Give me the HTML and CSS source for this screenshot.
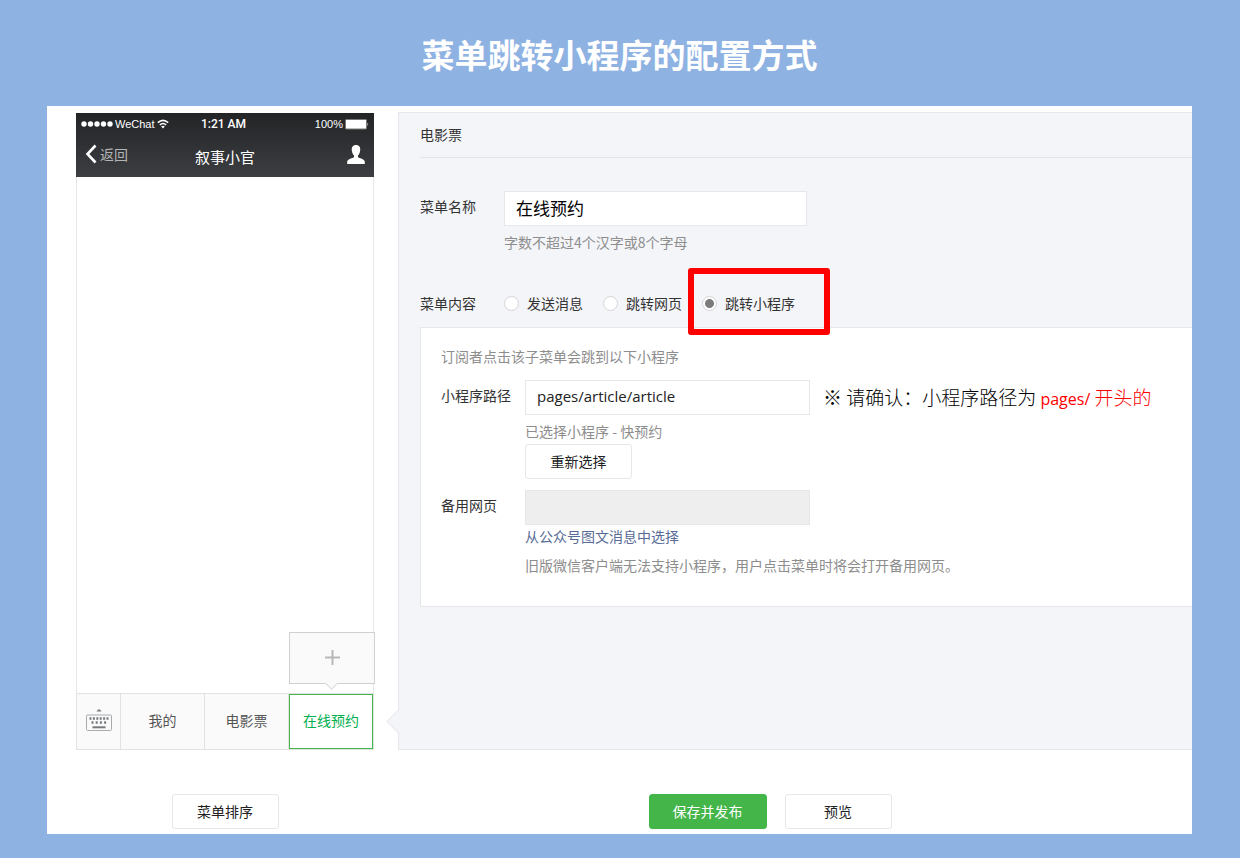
FILE: index.html
```html
<!DOCTYPE html>
<html lang="zh-CN">
<head>
<meta charset="utf-8">
<meta name="viewport" content="width=device-width, initial-scale=1">
<title>菜单跳转小程序的配置方式</title>
<link rel="stylesheet" href="styles.css">
</head>
<body class="page">
<h1 class="page-title">菜单跳转小程序的配置方式</h1>
<main class="board">
  <section class="phone">
    <header class="phone-head">
      <div class="status">
        <span class="carrier">
          <svg width="32" height="8" viewBox="0 0 32 8" fill="#fff" aria-hidden="true"><circle cx="3" cy="4" r="2.7"/><circle cx="9.5" cy="4" r="2.7"/><circle cx="16" cy="4" r="2.7"/><circle cx="22.5" cy="4" r="2.7"/><circle cx="29" cy="4" r="2.7"/></svg>
          WeChat
          <svg width="12" height="10" viewBox="0 0 12 10" fill="none" stroke="#fff" stroke-width="1.6" aria-hidden="true"><path d="M.8 3.6Q6-1 11.2 3.6M2.9 5.9Q6 3.1 9.1 5.9"/><path d="M4.2 7.4Q6 5.9 7.8 7.4L6 9.4Z" fill="#fff" stroke="none"/></svg>
        </span>
        <span class="clock">1:21 AM</span>
        <span class="battery">100%
          <svg width="24" height="11" viewBox="0 0 24 11" aria-hidden="true"><rect x=".5" y=".5" width="21" height="9.5" rx="1" fill="#fff" stroke="#777"/><path d="M22.5 3.5q1.5 1.8 0 3.6z" fill="#fff"/></svg>
        </span>
      </div>
      <div class="navbar">
        <a class="back" href="#"><svg width="12" height="20" viewBox="0 0 12 20" fill="none" stroke="#fff" stroke-width="2.6" aria-hidden="true"><path d="M10.5 1.5 2.5 10l8 8.5"/></svg>返回</a>
        <span class="nav-title">叙事小官</span>
        <svg class="user" width="18" height="19" viewBox="0 0 18 19" fill="#fff" aria-hidden="true"><path d="M9 0c3 0 4.5 2.2 4.2 5.2-.2 2.300-1 4-2.200 5.200v1.800c1 1 6.500 1.600 6.800 4.300V19H.2v-2.500c.3-2.700 5.800-3.300 6.800-4.300v-1.800C5.800 9.200 5 7.500 4.800 5.200 4.500 2.200 6 0 9 0z"/></svg>
      </div>
    </header>
    <div class="phone-body"></div>
    <nav class="menu">
      <button class="menu-key" type="button" aria-label="键盘">
        <svg width="26" height="24" viewBox="0 0 26 24" aria-hidden="true"><path d="M10.500 3.500 12 1.500h2l1.500 2z" fill="#777a7d"/><rect x=".5" y="7" width="25" height="15.500" rx="1" fill="none" stroke="#a9abad"/><path d="M3.500 10.500h19" stroke="#777a7d" stroke-width="2.500" stroke-dasharray="2 1.400"/><path d="M5.500 14.500h15" stroke="#777a7d" stroke-width="2.500" stroke-dasharray="2 2.200"/><path d="M6.500 19.300h13" stroke="#777a7d" stroke-width="2"/></svg>
      </button>
      <button class="menu-item" type="button">我的</button>
      <button class="menu-item" type="button">电影票</button>
      <div class="menu-slot">
        <button class="menu-item menu-item-current" type="button">在线预约</button>
        <button class="submenu-add" type="button" aria-label="添加"><svg width="15" height="15" viewBox="0 0 15 15" stroke="#b8b8b8" stroke-width="2" aria-hidden="true"><path d="M7.500 0v15M0 7.500h15"/></svg></button>
      </div>
    </nav>
  </section>

  <form class="editor" id="menu-form">
    <h2 class="editor-title">电影票</h2>
    <div class="field field-name">
      <label class="label" for="name">菜单名称</label>
      <div class="field-main">
        <input class="input input-name" id="name" type="text" value="在线预约">
        <p class="note">字数不超过4个汉字或8个字母</p>
      </div>
    </div>
    <div class="field field-kind" role="radiogroup" aria-labelledby="kind">
      <span class="label" id="kind">菜单内容</span>
      <div class="options">
        <label class="option"><input class="radio" type="radio" name="kind">发送消息</label>
        <label class="option"><input class="radio" type="radio" name="kind">跳转网页</label>
        <label class="option option-marked"><input class="radio" type="radio" name="kind" checked>跳转小程序</label>
      </div>
    </div>
    <div class="panel">
      <p class="note panel-intro">订阅者点击该子菜单会跳到以下小程序</p>
      <div class="field">
        <label class="label" for="path">小程序路径</label>
        <div class="field-main">
          <div class="path-row">
            <input class="input input-path" id="path" type="text" value="pages/article/article">
            <p class="callout">※ 请确认：小程序路径为 <strong class="callout-key"><span class="callout-path">pages/ </span>开头的</strong></p>
          </div>
          <p class="note">已选择小程序 - 快预约</p>
          <button class="button" type="button">重新选择</button>
        </div>
      </div>
      <div class="field field-backup">
        <label class="label" for="backup">备用网页</label>
        <div class="field-main">
          <input class="input input-backup" id="backup" type="text" disabled>
          <a class="link" href="#">从公众号图文消息中选择</a>
          <p class="note note-backup">旧版微信客户端无法支持小程序，用户点击菜单时将会打开备用网页。</p>
        </div>
      </div>
    </div>
  </form>

  <div class="sort-bar"><button class="button" type="button">菜单排序</button></div>
  <div class="action-bar">
    <button class="button button-primary" type="submit" form="menu-form">保存并发布</button>
    <button class="button" type="button">预览</button>
  </div>
</main>
</body>
</html>
```
FILE: styles.css
```css
* {
  box-sizing: border-box;
}

.page {
  margin: 0;
  padding: 30px 48px 24px 47px;
  background: #8eb2e2;
  color: #333;
  font: 14px/20px "Noto Sans CJK SC", sans-serif;
}

.page button,
.page input {
  font: inherit;
}

.page p {
  margin: 0;
}

.page-title {
  margin: 0 0 28px;
  color: #fff;
  font-size: 33px;
  font-weight: 700;
  line-height: 48px;
  text-align: center;
}

.board {
  display: grid;
  grid-template-columns: 298px minmax(0, 1fr);
  grid-template-rows: minmax(638px, auto) auto;
  column-gap: 24px;
  row-gap: 44px;
  padding: 6px 0 5px 29px;
  background: #fff;
}

/* Phone preview */

.phone {
  display: flex;
  flex-direction: column;
  padding-top: 1px;
}

.phone-head {
  height: 64px;
  padding: 2px 5px 0;
  background: linear-gradient(#232426, #3d3e42);
  color: #fff;
}

.status {
  display: grid;
  grid-template-columns: 1fr auto 1fr;
  align-items: center;
  font: 11px/18px "Liberation Sans", sans-serif;
}

.carrier,
.battery {
  display: flex;
  align-items: center;
  gap: 2px;
}

.battery {
  justify-content: flex-end;
}

.clock {
  padding-right: 3px;
  font: 500 12px/18px Roboto, sans-serif;
}

.navbar {
  display: grid;
  grid-template-columns: 1fr auto 1fr;
  align-items: center;
  padding: 8px 4px 0;
}

.back {
  display: flex;
  align-items: center;
  gap: 3px;
  color: #b4b5b7;
  text-decoration: none;
}

.nav-title {
  padding-top: 6px;
  font-size: 15px;
}

.user {
  justify-self: end;
}

.phone-body {
  flex: 1;
  border: solid #e7e7eb;
  border-width: 0 1px;
}

.menu {
  display: grid;
  grid-template-columns: 44px 1fr 1fr 1fr;
  height: 57px;
  border: 1px solid #e2e2e2;
  background: #fafafa;
}

.menu-key,
.menu-item {
  padding: 0 0 4px;
  border: 0;
  border-right: 1px solid #e2e2e2;
  background: #fafafa;
  color: #555;
}

.menu-key {
  display: grid;
  place-items: center;
}

.menu-slot {
  display: grid;
  position: relative;
}

.menu-slot .menu-item-current {
  border: 1px solid #44b549;
  background: #fff;
  color: #00b050;
}

.submenu-add {
  position: absolute;
  right: -2px;
  bottom: 65px;
  left: 0;
  display: grid;
  place-items: center;
  height: 52px;
  padding: 0 0 2px;
  border: 1px solid #d0d0d0;
  background: #fafafa;
}

.submenu-add::after {
  content: "";
  position: absolute;
  bottom: -5px;
  left: calc(50% - 5px);
  width: 8px;
  height: 8px;
  border: solid #d8d8d8;
  border-width: 0 1px 1px 0;
  background: #fafafa;
  transform: rotate(45deg);
}

/* Menu editor */

.editor {
  position: relative;
  padding: 0 0 24px 21px;
  border: 1px solid #e7e7eb;
  border-right: 0;
  background: #f4f5f9;
}

.editor::before {
  content: "";
  position: absolute;
  bottom: 18px;
  left: -9px;
  width: 18px;
  height: 18px;
  border: solid #e7e7eb;
  border-width: 0 0 1px 1px;
  background: #f4f5f9;
  clip-path: polygon(0 0, 100% 100%, 0 100%);
  transform: rotate(45deg);
}

.editor-title {
  margin: 0;
  padding: 11px 0 13px;
  border-bottom: 1px solid #e3e3e8;
  font-size: 14px;
  font-weight: 400;
}

.field {
  display: grid;
  grid-template-columns: 84px minmax(0, 1fr);
}

.field-main {
  display: flex;
  flex-direction: column;
  align-items: flex-start;
}

.label {
  padding-top: 5px;
}

.field-name {
  padding-top: 33px;
}

.input {
  width: 285px;
  height: 35px;
  padding: 0 11px 2px;
  border: 1px solid #e7e7eb;
  background: #fff;
  color: #222;
}

.page .input-name {
  width: 303px;
  color: #000;
  font-size: 17px;
}

.page .input-path {
  padding-bottom: 4px;
  font: 15px/20px "Open Sans", sans-serif;
}

.input-backup {
  background: #eee;
}

.note {
  color: #8d8d8d;
}

.field-main .note {
  padding: 6px 0 3px;
}

.field-kind {
  padding: 33px 0 14px;
}

.options {
  display: flex;
  gap: 20px;
  padding-top: 5px;
}

.option {
  display: flex;
  align-items: center;
  gap: 8px;
}

.option-marked {
  position: relative;
}

.option-marked::after {
  content: "";
  position: absolute;
  inset: -25px -35px -22px -14px;
  border: 6px solid #f00;
  border-radius: 3px;
  pointer-events: none;
}

.radio {
  appearance: none;
  width: 15px;
  height: 15px;
  margin: 0;
  border: 1px solid #d5d5d8;
  border-radius: 50%;
  background: #fff;
}

.radio:checked {
  background: radial-gradient(circle, #7b7b7b 4px, #fff 5px);
}

.panel {
  min-height: 280px;
  padding: 18px 0 20px 20px;
  border: 1px solid #e7e7eb;
  border-right: 0;
  background: #fff;
}

.panel-intro {
  padding-bottom: 14px;
}

.path-row {
  display: flex;
  align-items: center;
  gap: 13px;
}

.callout {
  color: #000;
  font-size: 19px;
  font-weight: 300;
  line-height: 28px;
  white-space: nowrap;
}

.callout-key {
  color: #f00;
  font-weight: 300;
}

.callout-path {
  font-family: "Open Sans", sans-serif;
  font-size: 16px;
  font-weight: 400;
}

.button {
  min-width: 107px;
  height: 35px;
  padding: 0 22px 2px;
  border: 1px solid #e7e7eb;
  border-radius: 3px;
  background: #fff;
  color: #222;
}

.button-primary {
  min-width: 118px;
  border-color: #44b549;
  background: #44b549;
  color: #fff;
}

.field-backup {
  padding-top: 11px;
}

.link {
  padding-top: 1px;
  color: #576b95;
  text-decoration: none;
}

.field-main .note-backup {
  padding-top: 9px;
}

/* Bottom actions */

.sort-bar,
.action-bar {
  display: flex;
  justify-content: center;
  gap: 18px;
}

.action-bar {
  padding-right: 50px;
}
```
